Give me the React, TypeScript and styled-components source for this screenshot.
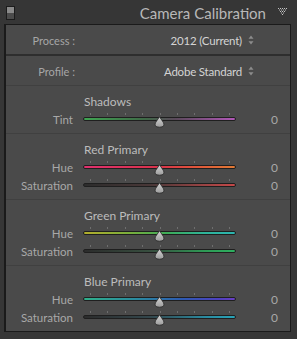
import React from 'react';
import styled, { createGlobalStyle } from 'styled-components';

const GlobalStyle = createGlobalStyle`
  html, body {
    margin: 0;
    padding: 0;
    background: #363636;
  }
  body {
    font-family: 'Lato', 'Open Sans', sans-serif;
    -webkit-font-smoothing: antialiased;
  }
`;

const Page = styled.div`
  width: 297px;
  height: 339px;
  background: #363636;
  display: flex;
  flex-direction: column;
`;

const Header = styled.div`
  height: 24px;
  flex-shrink: 0;
  display: flex;
  align-items: center;
  padding: 0 10px 0 6px;
`;

const Switch = styled.div`
  width: 7px;
  height: 12px;
  border: 1px solid #1c1c1c;
  background: linear-gradient(#8a8a8a 0 50%, #4c4c4c 50% 100%);
  margin-top: 1px;
`;

const Title = styled.div`
  flex: 1;
  text-align: right;
  font-size: 15px;
  color: #b8b8b8;
  padding-right: 12px;
  padding-top: 1px;
`;

const Panel = styled.div`
  flex-shrink: 0;
  margin: 0 6px 0 4px;
  border: 1px solid #1a1a1a;
  border-left-width: 2px;
  background: #4a4a4a;
  display: flex;
  flex-direction: column;
`;

const PickRow = styled.div<{ $h: number; $line: string }>`
  height: ${(p) => p.$h}px;
  box-sizing: border-box;
  display: grid;
  grid-template-columns: 69px 1fr auto;
  align-items: center;
  border-bottom: ${(p) => p.$line};
  padding: 1px 36px 0 0;
`;

const PickLabel = styled.div`
  text-align: right;
  font-size: 11px;
  color: #a6a6a6;
`;

const PickValue = styled.div`
  text-align: right;
  font-size: 11.5px;
  letter-spacing: -0.2px;
  color: #d4d4d4;
  padding-right: 6px;
`;

const Section = styled.div<{ $last?: boolean }>`
  padding: 7px 0 5px;
  border-bottom: ${(p) => (p.$last ? 'none' : '1px solid #404040')};
`;

const SectionTitle = styled.div`
  height: 17px;
  line-height: 17px;
  padding-left: 78px;
  font-size: 12px;
  color: #bcbcbc;
`;

const SlideRow = styled.div`
  height: 18px;
  display: grid;
  grid-template-columns: 67px 153px 43px;
  column-gap: 10px;
  align-items: center;
`;

const SlideLabel = styled.div`
  text-align: right;
  font-size: 11.5px;
  color: #a8a8a8;
`;

const SlideArea = styled.div`
  position: relative;
  height: 18px;
  display: flex;
  flex-direction: column;
  padding-top: 3px;
  box-sizing: border-box;
`;

const Ticks = styled.div`
  height: 2px;
  margin: 0 6px 0 7px;
  display: flex;
  justify-content: space-between;
`;

const Tick = styled.span`
  width: 1px;
  height: 2px;
  background: #6e6e6e;
`;

const Track = styled.div<{ $fill: string }>`
  margin-top: 2px;
  height: 4px;
  box-sizing: border-box;
  border: 1px solid #1f1f1f;
  border-radius: 2px;
  background: ${(p) => p.$fill};
`;

const ThumbWrap = styled.div`
  position: absolute;
  left: 71px;
  top: 2px;
  width: 11px;
  height: 12px;
`;

const Value = styled.div`
  text-align: right;
  font-size: 12px;
  color: #a8a8a8;
  padding-right: 11px;
`;

const Spin = () => (
  <svg width="6" height="10" viewBox="0 0 6 10">
    <path d="M3 0.5 L5.5 3.8 H0.5 Z" fill="#8c8c8c" />
    <path d="M3 9.5 L5.5 6.2 H0.5 Z" fill="#8c8c8c" />
  </svg>
);

const Collapse = () => {
  const dots: JSX.Element[] = [];
  for (let y = 0; y < 5; y++) {
    for (let x = y; x <= 8 - y; x++) {
      if ((x + y) % 2 === 0) dots.push(<rect key={`${x}-${y}`} x={x} y={y * 1.5} width="1" height="1" fill="#c4c4c4" />);
    }
  }
  return (
    <svg width="9" height="8" viewBox="0 0 9 8">
      {dots}
    </svg>
  );
};

const Thumb = () => (
  <ThumbWrap>
    <svg width="11" height="12" viewBox="0 0 11 12">
      <defs>
        <linearGradient id="th" x1="0" y1="0" x2="0" y2="1">
          <stop offset="0" stopColor="#d6d6d6" />
          <stop offset="1" stopColor="#9c9c9c" />
        </linearGradient>
      </defs>
      <path
        d="M5.5 0.8 L9.2 6.2 Q10.5 8.2 9.6 9.8 Q8.6 11.2 5.5 11.2 Q2.4 11.2 1.4 9.8 Q0.5 8.2 1.8 6.2 Z"
        fill="url(#th)"
        stroke="#2a2a2a"
        strokeWidth="0.8"
      />
    </svg>
  </ThumbWrap>
);

type Slider = { label: string; fill: string };
type Group = { title: string; sliders: Slider[] };

const groups: Group[] = [
  {
    title: 'Shadows',
    sliders: [{ label: 'Tint', fill: 'linear-gradient(90deg, #3fa552, #3f6a47 40%, #5a4a5a 60%, #b157b8)' }],
  },
  {
    title: 'Red Primary',
    sliders: [
      { label: 'Hue', fill: 'linear-gradient(90deg, #e0306e, #d8334a 50%, #e0573a 75%, #e07a35)' },
      { label: 'Saturation', fill: 'linear-gradient(90deg, #2c2c2c, #4a3838 45%, #9c4444 80%, #c44848)' },
    ],
  },
  {
    title: 'Green Primary',
    sliders: [
      { label: 'Hue', fill: 'linear-gradient(90deg, #b3ad2c, #7aae3c 30%, #3eac58 55%, #2fb49a 80%, #2cb4b0)' },
      { label: 'Saturation', fill: 'linear-gradient(90deg, #2c2c2c, #385040 45%, #2e9a55 80%, #2eb060)' },
    ],
  },
  {
    title: 'Blue Primary',
    sliders: [
      { label: 'Hue', fill: 'linear-gradient(90deg, #2fb08a, #2a8aa0 35%, #2d5ab2 65%, #5040c0 90%, #6a3fc4)' },
      { label: 'Saturation', fill: 'linear-gradient(90deg, #2c2c2c, #33484e 45%, #2a8aa0 80%, #28a4b8)' },
    ],
  },
];

export default function App() {
  return (
    <Page>
      <GlobalStyle />
      <Header>
        <Switch />
        <Title>Camera Calibration</Title>
        <Collapse />
      </Header>
      <Panel>
        <PickRow $h={31} $line="2px solid #2e2e2e">
          <PickLabel>Process :</PickLabel>
          <PickValue>2012 (Current)</PickValue>
          <Spin />
        </PickRow>
        <PickRow $h={30} $line="1px solid #404040">
          <PickLabel>Profile :</PickLabel>
          <PickValue>Adobe Standard</PickValue>
          <Spin />
        </PickRow>
        {groups.map((g, gi) => (
          <Section key={g.title} $last={gi === groups.length - 1}>
            <SectionTitle>{g.title}</SectionTitle>
            {g.sliders.map((s) => (
              <SlideRow key={s.label}>
                <SlideLabel>{s.label}</SlideLabel>
                <SlideArea>
                  <Ticks>
                    {Array.from({ length: 9 }).map((_, i) => (
                      <Tick key={i} />
                    ))}
                  </Ticks>
                  <Track $fill={s.fill} />
                  <Thumb />
                </SlideArea>
                <Value>0</Value>
              </SlideRow>
            ))}
          </Section>
        ))}
      </Panel>
    </Page>
  );
}
